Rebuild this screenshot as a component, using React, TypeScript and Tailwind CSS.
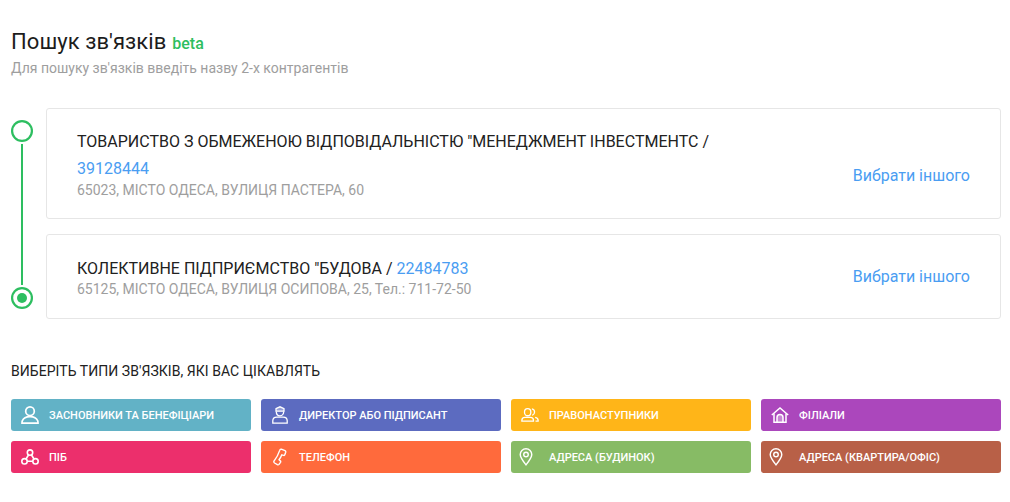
const Person = () => (
  <svg width="18" height="18" viewBox="0 0 18 18" fill="none" stroke="currentColor" strokeWidth="1.700">
    <circle cx="9" cy="5.200" r="4.300" />
    <path d="M1 17.100c0-.9 0-1.600.3-2.300C2.400 12.100 5.400 10.600 9 10.600s6.600 1.500 7.700 4.200c.3.700.3 1.400.3 2.300z" />
  </svg>
);
const Director = () => (
  <svg width="16" height="18" viewBox="0 0 16 18" fill="none" stroke="currentColor" strokeWidth="1.300">
    <path d="M4 2.600 8 .8l4 1.800v2.600H4z" fill="currentColor" fillOpacity=".35" />
    <path d="M4.300 5.500c0 2.600 1.600 4.300 3.700 4.300s3.700-1.700 3.700-4.300" />
    <path d="M.8 17.200v-2.400c0-2.100 1.800-3.600 4-3.600h6.400c2.200 0 4 1.500 4 3.600v2.400z" />
  </svg>
);
const Group = () => (
  <svg width="18" height="14" viewBox="0 0 19 15" fill="none" stroke="currentColor" strokeWidth="1.400">
    <ellipse cx="7" cy="4.500" rx="3.400" ry="3.800" />
    <path d="M.8 14v-.9c0-1.900 1.600-3.100 3.300-3.100h5.800c1.700 0 3.300 1.200 3.300 3.100v.9z" />
    <path d="M11.500 .9c1.900.3 2.900 1.900 2.900 3.500s-1 3-2.500 3.600M15 10c1.700.4 3.200 1.400 3.200 3.100v.9h-2.800" />
  </svg>
);
const House = () => (
  <svg width="18" height="16" viewBox="0 0 18 16" fill="none" stroke="currentColor" strokeWidth="1.500">
    <path d="M.8 8 9 1l8.200 7" />
    <path d="M3 6.500v8.700h12V6.500" />
    <path d="M6 15.200v-4.700a3 3 0 0 1 6 0v4.700" fill="currentColor" fillOpacity=".35" />
  </svg>
);
const Nodes = () => (
  <svg width="18" height="16" viewBox="0 0 18 16" fill="none" stroke="currentColor" strokeWidth="1.600">
    <circle cx="9" cy="3.600" r="2.700" />
    <circle cx="3.500" cy="12.300" r="2.700" />
    <circle cx="14.500" cy="12.300" r="2.700" />
    <path d="M7.500 6 5 10M10.500 6 13 10M6.200 12.300h5.600" />
  </svg>
);
const Phone = () => (
  <svg width="14" height="18" viewBox="0 0 14 18" fill="none" stroke="currentColor" strokeWidth="1.400" strokeLinejoin="round">
    <path d="M8.300 1.200 12 2.700Q13 3.200 12.700 4.200L11.800 6.800Q11.500 7.700 10.600 7.400L8.800 6.800Q7.800 9.600 6 11.800L7.300 12.900Q8 13.500 7.500 14.300L6 16.400Q5.300 17.200 4.400 16.700L1.600 15Q.6 14.300 .9 13.200 4.700 8.500 6.700 2.400 7.100 .9 8.300 1.200Z" />
  </svg>
);
const Pin = () => (
  <svg width="14" height="18" viewBox="0 0 14 19" fill="none" stroke="currentColor" strokeWidth="1.500">
    <path d="M7 17.800C3.200 13.100 .9 10.100 .9 6.900a6.100 6.100 0 0 1 12.200 0c0 3.200-2.300 6.200-6.100 10.900z" />
    <circle cx="7" cy="6.800" r="2.400" />
  </svg>
);

const types = [
  { label: "ЗАСНОВНИКИ ТА БЕНЕФІЦІАРИ", bg: "bg-[#62b2c6]", icon: <Person />, box: "pl-[10px] w-[38px]" },
  { label: "ДИРЕКТОР АБО ПІДПИСАНТ", bg: "bg-[#5c6bc0]", icon: <Director />, box: "pl-[11px] w-[38px]" },
  { label: "ПРАВОНАСТУПНИКИ", bg: "bg-[#ffb518]", icon: <Group />, box: "pl-[10px] w-[38px]" },
  { label: "ФІЛІАЛИ", bg: "bg-[#ab47bc]", icon: <House />, box: "pl-[10px] w-[38px]" },
  { label: "ПІБ", bg: "bg-[#ec2f6c]", icon: <Nodes />, box: "pl-[10px] w-[38px]" },
  { label: "ТЕЛЕФОН", bg: "bg-[#ff6a3c]", icon: <Phone />, box: "pl-[12px] w-[38px]" },
  { label: "АДРЕСА (БУДИНОК)", bg: "bg-[#87bb65]", icon: <Pin />, box: "pl-[8px] w-[38px]" },
  { label: "АДРЕСА (КВАРТИРА/ОФІС)", bg: "bg-[#b86047]", icon: <Pin />, box: "pl-[8px] w-[38px]" },
];

const Choose = ({ cls }: { cls: string }) => (
  <button className={`text-[16px] leading-5 text-[#4a9df2] whitespace-nowrap ${cls}`}>Вибрати іншого</button>
);

const ring = "rounded-full shadow-[inset_0_0_0_2.2px_#2dbe60]";

export default function App() {
  return (
    <div className="w-[1010px] h-[502px] overflow-hidden bg-white pl-[11px] pr-[9px] pt-[29px] font-['Roboto',sans-serif]">
      <div className="flex items-baseline gap-[6px] h-[26px]">
        <h1 className="text-[22px] leading-[26px] font-normal tracking-[0.07px] text-[#1c1c1c]">Пошук зв'язків</h1>
        <span className="text-[16px] font-medium text-[#2dbe60]">beta</span>
      </div>
      <p className="mt-[5px] text-[14px] leading-[16px] text-[#9e9e9e]">Для пошуку зв'язків введіть назву 2-х контрагентів</p>

      <div className="mt-[32px] flex gap-[13px]">
        <div className="flex w-[22px] flex-col items-center pt-[12px] pb-[10px]">
          <div className={`h-[22px] w-[22px] ${ring}`} />
          <div className="my-[2px] w-[2px] flex-1 bg-[#2dbe60]" />
          <div className={`flex h-[22px] w-[22px] items-center justify-center ${ring}`}>
            <div className="h-[10px] w-[10px] rounded-full bg-[#2dbe60]" />
          </div>
        </div>
        <div className="flex w-[955px] flex-col gap-[15px]">
          <div className="flex h-[111px] items-center justify-between rounded-[3px] border border-[#e6e6e6] pl-[30px] pr-[30px]">
            <div>
              <div className="-mt-px text-[16px] leading-[26px] text-[#212121]">
                ТОВАРИСТВО З ОБМЕЖЕНОЮ ВІДПОВІДАЛЬНІСТЮ "МЕНЕДЖМЕНТ ІНВЕСТМЕНТС /
              </div>
              <div className="text-[16px] leading-[27px] text-[#4a9df2]">39128444</div>
              <div className="text-[14px] leading-[16px] text-[#9e9e9e]">65023, МІСТО ОДЕСА, ВУЛИЦЯ ПАСТЕРА, 60</div>
            </div>
            <Choose cls="mt-[25px]" />
          </div>
          <div className="flex h-[85px] items-center justify-between rounded-[3px] border border-[#e6e6e6] pl-[30px] pr-[30px]">
            <div className="-mt-px">
              <div className="text-[16px] leading-[25px] text-[#212121]">
                КОЛЕКТИВНЕ ПІДПРИЄМСТВО "БУДОВА / <span className="text-[#4a9df2]">22484783</span>
              </div>
              <div className="text-[14px] leading-[16px] text-[#9e9e9e]">65125, МІСТО ОДЕСА, ВУЛИЦЯ ОСИПОВА, 25, Тел.: 711-72-50</div>
            </div>
            <Choose cls="mt-0" />
          </div>
        </div>
      </div>

      <h2 className="mt-[43px] text-[14px] leading-[18px] font-normal tracking-[0.05px] text-[#212121]">ВИБЕРІТЬ ТИПИ ЗВ'ЯЗКІВ, ЯКІ ВАС ЦІКАВЛЯТЬ</h2>
      <div className="mt-[19px] grid w-[990px] grid-cols-4 gap-[10px]">
        {types.map((t) => (
          <div key={t.label} className={`flex h-[32px] items-center rounded-[3px] text-white ${t.bg}`}>
            <span className={`flex shrink-0 items-center ${t.box}`}>{t.icon}</span>
            <span className="text-[11px] font-medium whitespace-nowrap translate-y-px">{t.label}</span>
          </div>
        ))}
      </div>
    </div>
  );
}
